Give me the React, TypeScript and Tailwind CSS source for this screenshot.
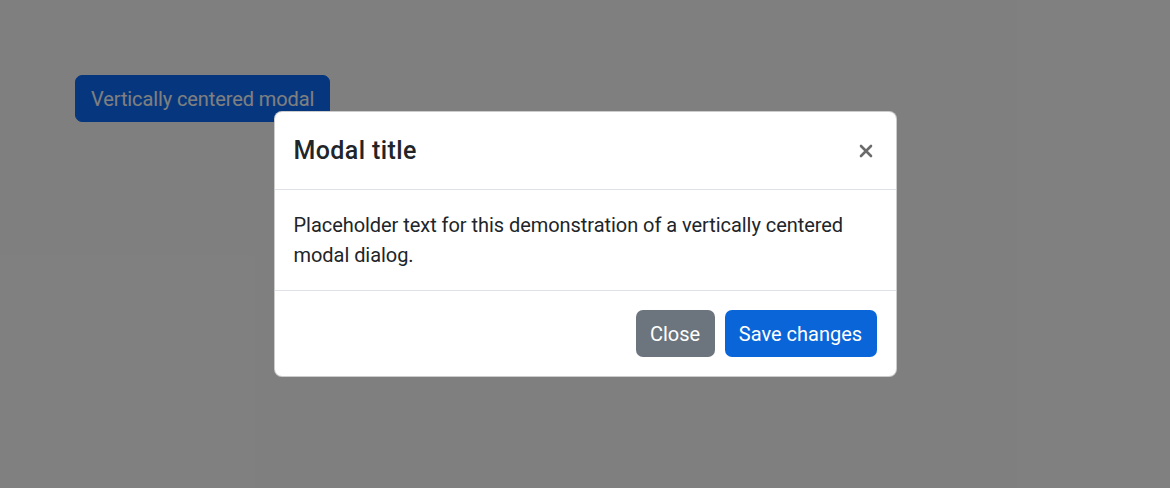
import React from "react";

export default function App() {
  const font = { fontFamily: 'Roboto, "Open Sans", sans-serif' };
  return (
    <div className="relative h-[488px] w-[1170px] overflow-hidden bg-white" style={font}>
      <div className="pl-[75px] pt-[75px]">
        <button className="h-[47px] rounded-[7px] border border-[#0d6efd] bg-[#0d6efd] px-[15px] text-[20px] leading-[30px] tracking-[-0.1px] text-white">
          Vertically centered modal
        </button>
      </div>
      <div className="absolute inset-0 flex items-center justify-center bg-black/50">
        <div className="flex w-[623px] flex-col rounded-[8px] border border-black/20 bg-white text-[#212529]">
          <div className="flex items-center justify-between border-b border-[#dee2e6] py-[20px] pl-[19px] pr-[22px]">
            <h5 className="text-[25px] font-medium leading-[37px] tracking-[0.4px]">Modal title</h5>
            <button className="flex h-[30px] w-[16px] items-center justify-center">
              <svg viewBox="0 0 14 14" width="14" height="14">
                <path d="M2 2L12 12M12 2L2 12" stroke="#6b6b6b" strokeWidth="2.6" strokeLinecap="round" />
              </svg>
            </button>
          </div>
          <div className="px-[19px] py-[20px] text-[20px] leading-[30px] tracking-[-0.05px]">
            Placeholder text for this demonstration of a vertically centered modal dialog.
          </div>
          <div className="flex items-center justify-end gap-[10px] border-t border-[#dee2e6] px-[19px] py-[19px]">
            <button className="h-[47px] w-[79px] rounded-[7px] bg-[#6c757d] text-[20px] leading-[30px] text-white">
              Close
            </button>
            <button className="h-[47px] w-[152px] rounded-[7px] bg-[#0a66d8] text-[20px] leading-[30px] text-white">
              Save changes
            </button>
          </div>
        </div>
      </div>
    </div>
  );
}
